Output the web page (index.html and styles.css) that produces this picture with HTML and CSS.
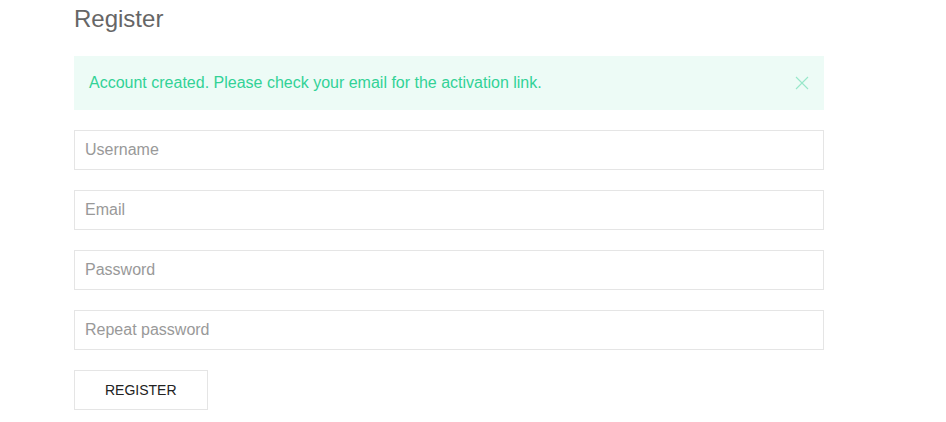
FILE: index.html
```html
<!DOCTYPE html>
<html>
<head>
<meta charset="utf-8">
<link rel="stylesheet" href="styles.css">
</head>
<body>
<div class="page">
  <h3 class="title">Register</h3>
  <div class="alert">
    <p class="alert-text">Account created. Please check your email for the activation link.</p>
    <button class="alert-close" aria-label="Close">
      <svg width="14" height="14" viewBox="0 0 14 14"><line fill="none" stroke="currentColor" stroke-width="1.1" x1="1" y1="1" x2="13" y2="13"/><line fill="none" stroke="currentColor" stroke-width="1.1" x1="13" y1="1" x2="1" y2="13"/></svg>
    </button>
  </div>
  <form class="form">
    <input class="input" type="text" placeholder="Username">
    <input class="input" type="email" placeholder="Email">
    <input class="input" type="password" placeholder="Password">
    <input class="input" type="password" placeholder="Repeat password">
    <div><button class="button" type="button">Register</button></div>
  </form>
</div>
</body>
</html>
```
FILE: styles.css
```css
* { box-sizing: border-box; }
html, body { margin: 0; background: #fff; }
body {
  font-family: "Liberation Sans", Arial, sans-serif;
  font-size: 16px;
  line-height: 1.5;
  color: #666;
}
.page {
  width: 750px;
  margin-left: 74px;
  padding-top: 2px;
}
.title {
  margin: 0 0 20px;
  font-size: 24px;
  line-height: 1.4;
  font-weight: 400;
  color: #666;
}
.alert {
  position: relative;
  background: #edfbf6;
  color: #32d296;
  padding: 15px 29px 15px 15px;
  margin-bottom: 20px;
}
.alert-text { margin: 0; }
.alert-close {
  position: absolute;
  top: 20px;
  right: 15px;
  padding: 0;
  border: 0;
  background: none;
  color: #32d296;
  opacity: 0.45;
  width: 14px;
  height: 14px;
  display: flex;
}
.form {
  display: flex;
  flex-direction: column;
  gap: 20px;
}
.input {
  display: block;
  width: 100%;
  height: 40px;
  margin: 0;
  padding: 0 10px;
  border: 1px solid #e5e5e5;
  background: #fff;
  color: #666;
  font-family: inherit;
  font-size: 16px;
  outline: none;
}
.input::placeholder { color: #999; }
.button {
  display: inline-block;
  margin: 0;
  height: 40px;
  padding: 0 30px;
  border: 1px solid #e5e5e5;
  background: transparent;
  color: #222;
  font-family: inherit;
  font-size: 14px;
  line-height: 38px;
  text-transform: uppercase;
}
```
